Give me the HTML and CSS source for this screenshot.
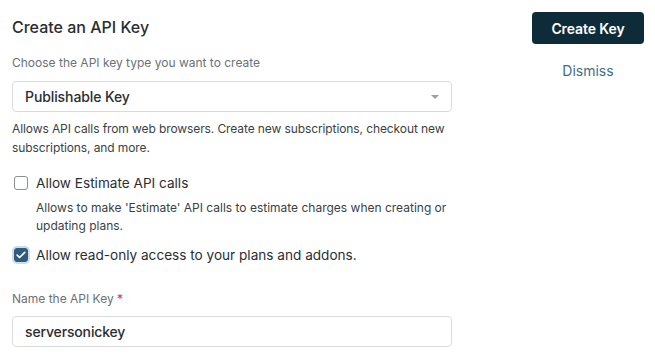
FILE: index.html
```html
<!DOCTYPE html>
<html>
<head>
<meta charset="utf-8">
<link rel="stylesheet" href="styles.css">
</head>
<body>
<div class="page">
  <div class="form">
    <h1 class="title">Create an API Key</h1>
    <div class="label">Choose the API key type you want to create</div>
    <div class="select">
      <span>Publishable Key</span>
      <svg class="caret" width="8" height="4" viewBox="0 0 8 4"><path d="M0 0h8L4 4z" fill="#9aa0a6"/></svg>
    </div>
    <p class="help">Allows API calls from web browsers. Create new subscriptions, checkout new subscriptions, and more.</p>
    <div class="check">
      <span class="box"></span>
      <span class="check-label">Allow Estimate API calls</span>
    </div>
    <p class="help sub">Allows to make 'Estimate' API calls to estimate charges when creating or updating plans.</p>
    <div class="check checked-row">
      <span class="box checked"><svg width="10" height="8" viewBox="0 0 10 8"><path d="M1.2 4.2l2.4 2.3L8.8 1.3" fill="none" stroke="#fff" stroke-width="1.7" stroke-linecap="round" stroke-linejoin="round"/></svg></span>
      <span class="check-label">Allow read-only access to your plans and addons.</span>
    </div>
    <div class="label name-label">Name the API Key <span class="req">*</span></div>
    <div class="input">serversonickey</div>
  </div>
  <div class="actions">
    <button class="btn">Create Key</button>
    <a class="dismiss">Dismiss</a>
  </div>
</div>
</body>
</html>
```
FILE: styles.css
```css
* { box-sizing: border-box; }
body { margin: 0; font-family: Inter, "Noto Sans", sans-serif; color: #1f2328; background: #fff; }
.page { display: flex; justify-content: space-between; padding: 12px 11px 0 12px; }
.form { width: 440px; display: flex; flex-direction: column; }
.title { margin: 4px 0 0; font-size: 16px; font-weight: 500; line-height: 22px; color: #2a2d31; }
.label { margin-top: 16px; font-size: 12px; line-height: 18px; color: #6b7177; }
.select { margin-top: 9px; height: 31px; border: 1px solid #d8dbde; border-radius: 4px; display: flex; align-items: center; justify-content: space-between; padding: 0 12px; font-size: 14px; font-weight: 500; color: #2a2d31; letter-spacing: -0.1px; }
.help { margin: 7px 0 0; font-size: 12px; line-height: 19px; color: #3a3f44; letter-spacing: -0.1px; }
.sub { margin: 6px 0 0 24px; line-height: 18px; letter-spacing: 0; }
.check { display: flex; align-items: center; gap: 8px; margin-top: 16px; padding-left: 2px; font-size: 13.6px; line-height: 20px; color: #2a2d31; }
.checked-row { margin-top: 10px; padding-left: 1px; gap: 8px; }
.box { width: 14px; height: 14px; border: 1px solid #8a9096; border-radius: 3px; display: inline-flex; align-items: center; justify-content: center; flex: none; }
.box.checked { margin-left: 1px; background: #2f5b7c; border-color: #2f5b7c; box-shadow: 0 0 0 2px #cfdbe6; }
.name-label { margin-top: 25px; }
.req { color: #e0245e; }
.input { margin-top: 8px; height: 31px; border: 1px solid #d8dbde; border-radius: 4px; display: flex; align-items: center; padding: 0 12px; font-size: 14px; font-weight: 500; color: #2a2d31; letter-spacing: -0.15px; }
.actions { display: flex; flex-direction: column; align-items: center; }
.btn { width: 112px; height: 32px; border: 0; border-radius: 4px; background: #0d2b39; color: #fff; font-family: inherit; font-size: 14px; font-weight: 600; letter-spacing: -0.1px; }
.dismiss { margin-top: 18px; font-size: 14px; line-height: 18px; color: #3d6e8e; }
```
